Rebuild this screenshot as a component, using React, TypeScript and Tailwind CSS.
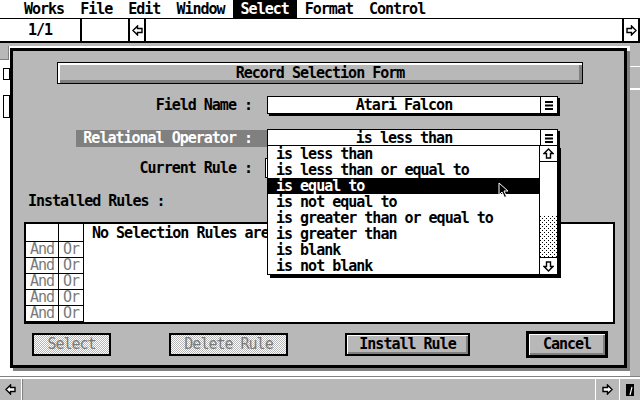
import React from "react";

const FONT = "font-['DejaVu_Sans_Mono',monospace] font-bold text-[15px] tracking-[-1px]";
const MENU = ["Works", "File", "Edit", "Window", "Select", "Format", "Control"];
const OPERATORS = [
  "is less than",
  "is less than or equal to",
  "is equal to",
  "is not equal to",
  "is greater than or equal to",
  "is greater than",
  "is blank",
  "is not blank",
];

function Arrow({ dir }: { dir: "left" | "right" | "up" | "down" }) {
  const rot = { left: 0, right: 180, up: 90, down: 270 }[dir];
  return (
    <svg width="11" height="11" viewBox="0 0 11 11" style={{ transform: `rotate(${rot}deg)` }}>
      <polygon points="1,5.5 5.5,1 5.5,3.5 10,3.5 10,7.5 5.5,7.5 5.5,10" fill="#fff" stroke="#000" strokeWidth="1.4" strokeLinejoin="miter" />
    </svg>
  );
}

function Bars() {
  return (
    <svg width="8" height="9" viewBox="0 0 8 9">
      <rect x="0" y="0" width="8" height="2" fill="#000" />
      <rect x="0" y="3.5" width="8" height="2" fill="#000" />
      <rect x="0" y="7" width="8" height="2" fill="#000" />
    </svg>
  );
}

function PopupBox({ text, width }: { text: string; width: string }) {
  return (
    <div className={`flex h-[18px] ${width} border border-black bg-white shadow-[2px_2px_0_#000]`}>
      <div className="flex flex-1 items-center justify-center leading-none">{text}</div>
      <div className="flex w-[17px] items-center justify-center border-l border-black">
        <Bars />
      </div>
    </div>
  );
}

export default function App() {
  return (
    <div className={`relative flex h-[400px] w-[640px] flex-col overflow-hidden bg-white text-black ${FONT}`}>
      {/* menu bar */}
      <div className="flex h-[19px] items-center border-b border-black pl-[16px] leading-[18px]">
        {MENU.map((m) => (
          <span key={m} className={m === "Select" ? "bg-black px-2 text-white" : "px-2"}>
            {m}
          </span>
        ))}
      </div>

      {/* info line */}
      <div className="flex h-[24px] border-b-2 border-black">
        <div className="flex w-[82px] items-center justify-center border-r-2 border-black">1/1</div>
        <div className="w-[48px] border-r-2 border-black" />
        <div className="flex w-[16px] items-center justify-center border-r-2 border-black">
          <Arrow dir="left" />
        </div>
        <div className="flex-1 border-r-2 border-black" />
        <div className="flex w-[16px] items-center justify-center border-r-2 border-black">
          <Arrow dir="right" />
        </div>
      </div>

      {/* window work area behind dialog */}
      <div className="flex flex-1">
        <div className="flex w-[630px] flex-col">
          <div className="h-[3px] bg-[#b8b8b8]" />
          <div className="h-[14px] w-[9px] border-r border-b border-[#808080] bg-[#b8b8b8]" />
          <div className="ml-[3px] mt-[8px] h-[12px] w-[7px] border border-black" />
          <div className="ml-[3px] mt-[15px] h-[23px] w-[7px] border border-black" />
        </div>
        <div className="flex w-[10px] flex-col bg-[#b8b8b8]">
          <div className="h-[24px] border-b border-white" />
          <div className="h-[23px] border-b-2 border-white" />
        </div>
      </div>

      {/* bottom scroll bar */}
      <div className="flex h-[23px] border-t-2 border-white bg-[#b8b8b8] shadow-[0_-1px_0_#808080]">
        <div className="flex w-[22px] items-center justify-center border-r border-white">
          <Arrow dir="left" />
        </div>
        <div className="flex-1 border-l border-[#808080]" />
        <div className="flex w-[25px] items-center justify-center border-x border-white">
          <Arrow dir="right" />
        </div>
        <div className="flex w-[20px] items-center justify-center">
          <svg width="8" height="12" viewBox="0 0 8 12">
            <polygon points="0,0 8,0 8,12 0,12" fill="#000" />
            <line x1="6" y1="3" x2="4" y2="11" stroke="#fff" strokeWidth="1.2" />
          </svg>
        </div>
      </div>

      {/* dialog */}
      <div className="absolute left-[10px] top-[48px] flex h-[320px] w-[617px] flex-col border-[3px] border-black bg-[#b8b8b8] shadow-[3px_3px_0_#808080]">
        <div className="ml-[44px] mt-[11px] flex h-[22px] w-[526px] items-center justify-center border border-black shadow-[inset_2px_2px_0_#fff,inset_-3px_-3px_0_#808080]">
          Record Selection Form
        </div>

        <div className="mt-[12px] flex h-[18px] items-center">
          <div className="w-[254px] pr-[15px] text-right">Field Name :</div>
          <PopupBox text="Atari Falcon" width="w-[291px]" />
        </div>

        <div className="mt-[15px] flex h-[18px] items-center">
          <div className="ml-[63px] flex h-[17px] w-[191px] items-center justify-end bg-[#808080] pr-[15px] text-white">
            Relational Operator :
          </div>
          <PopupBox text="is less than" width="w-[291px]" />
        </div>

        <div className="mt-[11px] flex h-[20px] items-center">
          <div className="w-[252px] pr-[13px] text-right">Current Rule :</div>
          <div className="h-[20px] w-[293px] border border-black bg-white" />
        </div>

        <div className="mt-[14px] flex h-[18px] items-center pl-[15px]">Installed Rules :</div>

        <div className="ml-[11px] mt-[12px] flex h-[102px] w-[591px] border-2 border-black bg-white">
          <div className="flex w-[58px] flex-col self-start border-r border-b border-black">
            {[0, 1, 2, 3, 4, 5].map((i) => (
              <div key={i} className={`flex h-[16px] border-black ${i === 0 ? "h-[17px]" : "border-t"}`}>
                <div className="flex w-[33px] items-center justify-center border-r border-black font-normal text-[#7a7a7a]">
                  {i === 0 ? "" : "And"}
                </div>
                <div className="flex flex-1 items-center justify-center font-normal text-[#7a7a7a]">{i === 0 ? "" : "Or"}</div>
              </div>
            ))}
          </div>
          <div className="ml-[8px] mt-[1px] leading-[16px]">No Selection Rules are</div>
        </div>

        <div className="mt-[9px] flex h-[23px] items-center">
          <div className="ml-[19px] flex h-[23px] w-[79px] items-center justify-center border-2 border-black bg-[conic-gradient(#fff_0_25%,#b8b8b8_0_50%,#fff_0_75%,#b8b8b8_0)] bg-[length:2px_2px] font-normal text-[#7a7a7a]">
            Select
          </div>
          <div className="ml-[58px] flex h-[23px] w-[119px] items-center justify-center border-2 border-black bg-[conic-gradient(#fff_0_25%,#b8b8b8_0_50%,#fff_0_75%,#b8b8b8_0)] bg-[length:2px_2px] font-normal text-[#7a7a7a]">
            Delete Rule
          </div>
          <div className="ml-[57px] flex h-[23px] w-[125px] items-center justify-center border-2 border-black shadow-[inset_1px_1px_0_#fff,inset_-2px_-2px_0_#808080]">
            Install Rule
          </div>
          <div className="ml-[56px] flex h-[27px] w-[82px] items-center justify-center border-[3px] border-black shadow-[inset_1px_1px_0_#fff,inset_-2px_-2px_0_#808080]">
            Cancel
          </div>
        </div>

        {/* open popup list */}
        <div className="absolute left-[254px] top-[94px] flex h-[130px] w-[291px] border border-black bg-white shadow-[3px_3px_0_#000]">
          <div className="flex flex-1 flex-col">
            {OPERATORS.map((op, i) => (
              <div
                key={op}
                className={`flex h-[16px] items-center whitespace-pre pl-[8px] leading-none ${i === 2 ? "bg-black text-white" : ""}`}
              >
                {op}
              </div>
            ))}
          </div>
          <div className="flex w-[18px] flex-col border-l border-black">
            <div className="flex h-[16px] items-center justify-center border-b border-black">
              <Arrow dir="up" />
            </div>
            <div className="h-[54px]" />
            <svg width="17" height="41" className="block">
              <defs>
                <pattern id="dots" width="4" height="4" patternUnits="userSpaceOnUse">
                  <rect x="0" y="0" width="1" height="1" fill="#000" />
                  <rect x="2" y="2" width="1" height="1" fill="#000" />
                </pattern>
              </defs>
              <rect width="17" height="41" fill="url(#dots)" />
            </svg>
            <div className="flex flex-1 items-center justify-center border-t border-black">
              <Arrow dir="down" />
            </div>
          </div>
        </div>

        {/* mouse pointer */}
        <svg className="absolute left-[485px] top-[131px]" width="12" height="17" viewBox="0 0 12 17">
          <path d="M1,1 L1,13 L4,10 L6.5,15.5 L8.5,14.5 L6,9 L10,9 Z" fill="#000" stroke="#fff" strokeWidth="1" />
        </svg>
      </div>
    </div>
  );
}
